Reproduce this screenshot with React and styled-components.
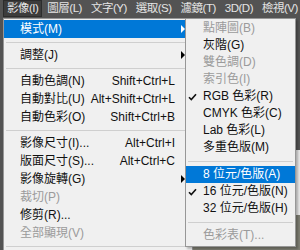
import React from 'react';
import styled, { createGlobalStyle, css } from 'styled-components';

const GlobalStyle = createGlobalStyle`
  html, body { margin: 0; padding: 0; background: #535353; }
`;

const Screen = styled.div`
  position: relative;
  width: 300px;
  height: 250px;
  overflow: hidden;
  display: flex;
  flex-direction: column;
  background: #535353;
  font-family: 'Liberation Sans', 'Noto Sans CJK TC', sans-serif;
  font-size: 12px;
`;

const MenuBar = styled.div`
  display: flex;
  align-items: flex-start;
  height: 18px;
  padding-left: 3px;
  gap: 1px;
  flex-shrink: 0;
`;

const BarItem = styled.div`
  box-sizing: border-box;
  height: 17px;
  line-height: 15px;
  padding: 0 3px;
  color: #e4e4e4;
  font-size: 11.5px;
  white-space: nowrap;
  letter-spacing: -0.5px;
  border: 1px solid transparent;
  ${p => p.$open && css`
    background: #3c3c3c;
    border-color: #2c2c2c;
  `}
`;

const Workspace = styled.div`
  flex: 1;
  display: grid;
  grid-template-rows: 132px 65px 1fr;
  justify-items: end;
`;

const DocStrip = styled.div`
  grid-row: 2;
  width: 6px;
  background: #e6e6e6;
`;

const Canvas = styled.div`
  grid-row: 3;
  width: 110px;
  background: #7d7d72;
`;

const Menu = styled.div`
  position: absolute;
  top: 18px;
  box-sizing: border-box;
  background: #f0f0f0;
  border: 1px solid #979797;
  padding: 1px 0 3px;
  color: #111;
  ${p => p.$main
    ? css`
        left: 3px;
        width: 190px;
        height: 260px;
      `
    : css`
        left: 185px;
        width: 111px;
        height: 229px;
        box-shadow: 2px 2px 2px rgba(0, 0, 0, 0.25);
      `}
`;

const Row = styled.div`
  display: grid;
  grid-template-columns: ${p => (p.$main ? '16px 1fr auto 17px' : '17px 1fr')};
  align-items: center;
  height: ${p => (p.$main ? 18 : 17)}px;
  line-height: 17px;
  white-space: nowrap;
  color: ${p => (p.$disabled ? '#9b9b9b' : '#111')};
  ${p => p.$active && css`
    background: #0078d7;
    color: #fff;
  `}
`;

const CheckCell = styled.div`
  display: flex;
  justify-content: flex-end;
  padding-right: 6px;
`;

const Shortcut = styled.span`
  text-align: right;
`;

const ArrowCell = styled.div`
  display: flex;
  padding-left: 6px;
`;

const Arrow = styled.div`
  width: 0;
  height: 0;
  border-top: 4px solid transparent;
  border-bottom: 4px solid transparent;
  border-left: 4px solid ${p => (p.$light ? '#fff' : '#000')};
`;

const Separator = styled.div`
  height: ${p => p.$h}px;
  display: flex;
  align-items: center;
  padding: 0 2px;
  &::after {
    content: '';
    flex: 1;
    height: 1px;
    background: #cfcfcf;
  }
`;

const Check = ({ color }) => (
  <svg width="9" height="8" viewBox="0 0 9 8">
    <path d="M1 4.2 L3.3 6.6 L8 1.2" fill="none" stroke={color} strokeWidth="1.6" />
  </svg>
);

const barItems = ['影像(I)', '圖層(L)', '文字(Y)', '選取(S)', '濾鏡(T)', '3D(D)', '檢視(V)'];

const mainItems = [
  { label: '模式(M)', sub: true, active: true },
  { sep: 8 },
  { label: '調整(J)', sub: true },
  { sep: 8 },
  { label: '自動色調(N)', key: 'Shift+Ctrl+L' },
  { label: '自動對比(U)', key: 'Alt+Shift+Ctrl+L' },
  { label: '自動色彩(O)', key: 'Shift+Ctrl+B' },
  { sep: 8 },
  { label: '影像尺寸(I)...', key: 'Alt+Ctrl+I' },
  { label: '版面尺寸(S)...', key: 'Alt+Ctrl+C' },
  { label: '影像旋轉(G)', sub: true },
  { label: '裁切(P)', disabled: true },
  { label: '修剪(R)...' },
  { label: '全部顯現(V)', disabled: true },
  { sep: 8 },
];

const modeItems = [
  { label: '點陣圖(B)', disabled: true },
  { label: '灰階(G)' },
  { label: '雙色調(D)', disabled: true },
  { label: '索引色(I)', disabled: true },
  { label: 'RGB 色彩(R)', checked: true },
  { label: 'CMYK 色彩(C)' },
  { label: 'Lab 色彩(L)' },
  { label: '多重色版(M)' },
  { sep: 10 },
  { label: '8 位元/色版(A)', active: true },
  { label: '16 位元/色版(N)', checked: true },
  { label: '32 位元/色版(H)' },
  { sep: 10 },
  { label: '色彩表(T)...', disabled: true },
];

const MainMenu = () => (
  <Menu $main>
    {mainItems.map((item, i) =>
      item.sep ? (
        <Separator key={i} $h={item.sep} />
      ) : (
        <Row key={i} $main $active={item.active} $disabled={item.disabled}>
          <CheckCell />
          <span>{item.label}</span>
          <Shortcut>{item.key}</Shortcut>
          <ArrowCell>{item.sub && <Arrow $light={item.active} />}</ArrowCell>
        </Row>
      )
    )}
  </Menu>
);

const ModeMenu = () => (
  <Menu>
    {modeItems.map((item, i) =>
      item.sep ? (
        <Separator key={i} $h={item.sep} />
      ) : (
        <Row key={i} $active={item.active} $disabled={item.disabled}>
          <CheckCell>{item.checked && <Check color={item.active ? '#fff' : '#111'} />}</CheckCell>
          <span>{item.label}</span>
        </Row>
      )
    )}
  </Menu>
);

const App = () => {
  return (
    <Screen>
      <GlobalStyle />
      <MenuBar>
        {barItems.map((label, i) => (
          <BarItem key={label} $open={i === 0}>
            {label}
          </BarItem>
        ))}
      </MenuBar>
      <Workspace>
        <DocStrip />
        <Canvas />
      </Workspace>
      <MainMenu />
      <ModeMenu />
    </Screen>
  );
};

export default App;
